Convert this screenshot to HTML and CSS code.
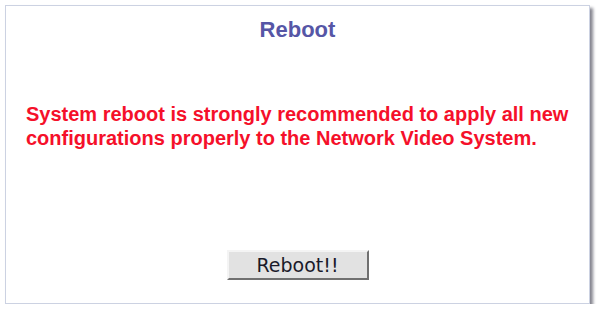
FILE: index.html
```html
<!DOCTYPE html>
<html>
<head>
<meta charset="utf-8">
<link rel="stylesheet" href="styles.css">
</head>
<body>
<div class="panel">
  <h1 class="title">Reboot</h1>
  <p class="message">System reboot is strongly recommended to apply all new configurations properly to the Network Video System.</p>
  <div class="actions">
    <button class="btn" type="button">Reboot!!</button>
  </div>
</div>
</body>
</html>
```
FILE: styles.css
```css
html, body {
  margin: 0;
  padding: 0;
  background: #ffffff;
}
body {
  padding: 5px 0 0 5px;
}
.panel {
  width: 585px;
  height: 299px;
  box-sizing: border-box;
  border: 1px solid #ccd2e2;
  background: #ffffff;
  box-shadow: 3px 3px 3px #85858f;
  display: flex;
  flex-direction: column;
}
.title {
  margin: 12px 0 0 0;
  text-align: center;
  font-family: "Liberation Sans", Arial, sans-serif;
  font-weight: bold;
  font-size: 22px;
  line-height: 24px;
  color: #5656a6;
}
.message {
  margin: 60px 0 0 20px;
  font-family: "Liberation Sans", Arial, sans-serif;
  font-weight: bold;
  font-size: 20px;
  line-height: 24px;
  color: #f5102a;
}
.actions {
  margin-top: auto;
  margin-bottom: 23px;
  display: flex;
  justify-content: center;
}
.btn {
  width: 142px;
  height: 30px;
  font-family: "DejaVu Sans", Tahoma, sans-serif;
  font-size: 19px;
  color: #1a1a2a;
  background: #e2e2e2;
  border: 2px solid;
  border-color: #f4f4f4 #707070 #707070 #f4f4f4;
  padding: 0;
}
```
